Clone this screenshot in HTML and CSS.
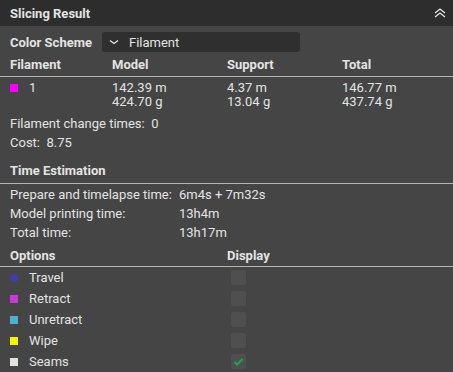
FILE: index.html
```html
<!DOCTYPE html>
<html lang="en">

<head>
    <meta charset="UTF-8">
    <meta name="viewport" content="width=device-width, initial-scale=1.0">
    <title>Slicing Result</title>
    <link rel="stylesheet" href="styles.css">
</head>

<body>
    <div class="panel">
        <div class="panel-header">
            <span class="panel-title">Slicing Result</span>
            <svg class="collapse-icon" width="14" height="12" viewBox="0 0 14 12">
                <path d="M2 6 L7 2 L12 6 M2 10 L7 6 L12 10" fill="none" stroke="#e6e6e6" stroke-width="1.3"/>
            </svg>
        </div>

        <div class="panel-body">
            <div class="scheme-row">
                <span class="bold">Color Scheme</span>
                <div class="combo">
                    <svg class="combo-arrow" width="10" height="6" viewBox="0 0 10 6">
                        <path d="M1 1.5 L5 4.5 L9 1.5" fill="none" stroke="#e6e6e6" stroke-width="1.2"/>
                    </svg>
                    <span>Filament</span>
                </div>
            </div>

            <div class="grid4 head-row bold">
                <span>Filament</span>
                <span>Model</span>
                <span>Support</span>
                <span>Total</span>
            </div>
            <div class="rule"></div>
            <div class="grid4 data-row">
                <span class="fil-id"><i class="swatch magenta"></i>1</span>
                <span>142.39 m<br>424.70 g</span>
                <span>4.37 m<br>13.04 g</span>
                <span>146.77 m<br>437.74 g</span>
            </div>

            <div class="info-line first">Filament change times:&nbsp;&nbsp;0</div>
            <div class="info-line">Cost:&nbsp;&nbsp;8.75</div>

            <div class="section-title bold">Time Estimation</div>
            <div class="rule wide"></div>
            <div class="time-grid">
                <span>Prepare and timelapse time:</span><span>6m4s + 7m32s</span>
                <span>Model printing time:</span><span>13h4m</span>
                <span>Total time:</span><span>13h17m</span>
            </div>

            <div class="opt-grid opt-head bold">
                <span>Options</span>
                <span>Display</span>
            </div>
            <div class="rule tight"></div>
            <div class="opt-list">
                <div class="opt-grid opt-row">
                    <span><i class="swatch travel"></i>Travel</span>
                    <span class="check"></span>
                </div>
                <div class="opt-grid opt-row">
                    <span><i class="swatch retract"></i>Retract</span>
                    <span class="check"></span>
                </div>
                <div class="opt-grid opt-row">
                    <span><i class="swatch unretract"></i>Unretract</span>
                    <span class="check"></span>
                </div>
                <div class="opt-grid opt-row">
                    <span><i class="swatch wipe"></i>Wipe</span>
                    <span class="check"></span>
                </div>
                <div class="opt-grid opt-row">
                    <span><i class="swatch seams"></i>Seams</span>
                    <span class="check">
                        <svg width="15" height="15" viewBox="0 0 15 15">
                            <path d="M3.5 8 L6.2 10.5 L11.5 5" fill="none" stroke="#1fa34a" stroke-width="2.2"/>
                        </svg>
                    </span>
                </div>
            </div>
        </div>
    </div>
</body>

</html>
```

FILE: styles.css
```css
body {
    margin: 0;
    padding: 0;
    background-color: #454545;
    font-family: Roboto, Arial, sans-serif;
    font-size: 13px;
    color: #e3e3e3;
}

.panel {
    width: 453px;
    height: 372px;
    overflow: hidden;
    background-color: #454545;
}

.bold {
    font-weight: bold;
}

.panel-header {
    height: 26px;
    background-color: #2d2d2d;
    display: flex;
    align-items: center;
    justify-content: space-between;
    padding: 0 6px 0 10px;
}

.panel-title {
    font-weight: bold;
    font-size: 13px;
}

.panel-body {
    display: flex;
    flex-direction: column;
}

.scheme-row {
    display: flex;
    align-items: center;
    padding: 6px 0 0 10px;
    height: 20px;
}

.combo {
    margin-left: 10px;
    width: 198px;
    height: 20px;
    background-color: #2f2f2f;
    border-radius: 3px;
    display: flex;
    align-items: center;
    padding-left: 7px;
    box-sizing: border-box;
}

.combo-arrow {
    margin-right: 10px;
}

.grid4 {
    display: grid;
    grid-template-columns: 102px 115px 115px 1fr;
    padding-left: 10px;
}

.head-row {
    margin-top: 2px;
    height: 20px;
    align-items: center;
}

.rule {
    height: 1px;
    background-color: #b4b4b4;
    margin-top: 2px;
}

.rule.wide {
    margin-top: 3px;
}

.rule.tight {
    margin-top: 1px;
}

.data-row {
    margin-top: 4px;
    line-height: 14px;
}

.fil-id {
    display: flex;
    align-items: flex-start;
}

.swatch {
    display: inline-block;
    width: 8px;
    height: 8px;
    margin-right: 11px;
    vertical-align: 0;
}

.fil-id .swatch {
    margin-top: 3px;
}

.magenta { background-color: #ff00ff; }
.travel { background-color: #3b3fa6; border-radius: 3px; }
.retract { background-color: #c83ad8; }
.unretract { background-color: #4cb3d6; }
.wipe { background-color: #f4f400; }
.seams { background-color: #e3e3e3; }

.info-line {
    padding-left: 10px;
    height: 19px;
    line-height: 19px;
}

.info-line.first {
    margin-top: 5px;
}

.section-title {
    padding-left: 10px;
    margin-top: 9px;
    height: 19px;
    line-height: 19px;
}

.time-grid {
    display: grid;
    grid-template-columns: 169px 1fr;
    padding-left: 10px;
    line-height: 19px;
    margin-top: 1px;
}

.opt-grid {
    display: grid;
    grid-template-columns: 217px 1fr;
    padding-left: 10px;
    align-items: center;
}

.opt-head {
    margin-top: 4px;
    height: 19px;
}

.opt-row {
    height: 21px;
}

.check {
    width: 15px;
    height: 15px;
    margin-left: 4px;
    background-color: #4f4f4f;
    border-radius: 2px;
    display: block;
}

.check svg {
    display: block;
}
```
